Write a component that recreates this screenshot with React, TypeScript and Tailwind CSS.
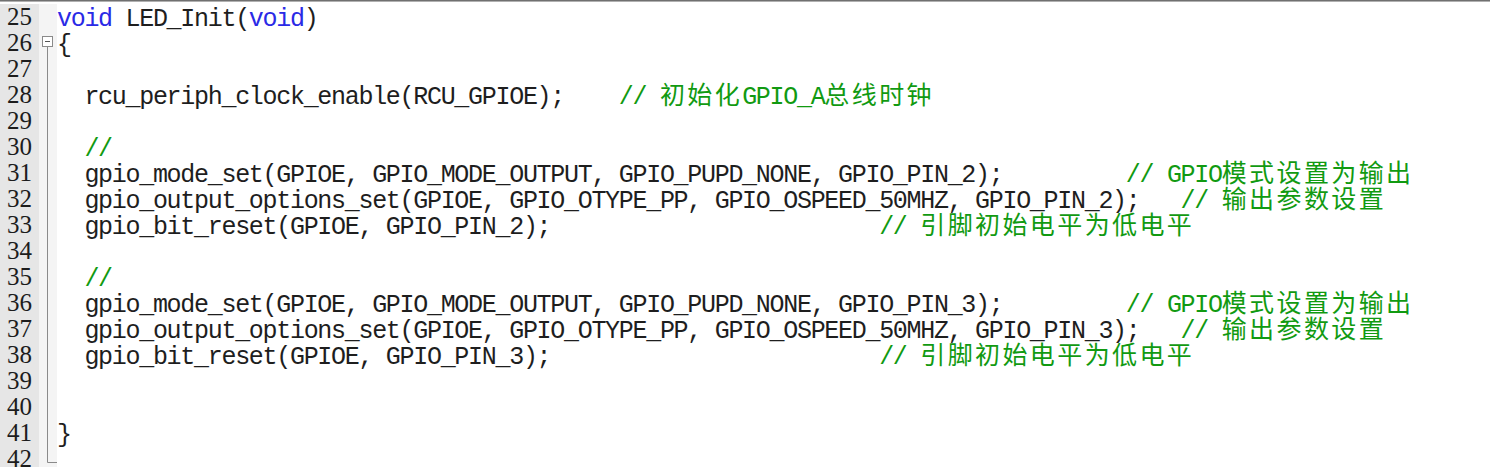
import React from 'react';

type Fold = 'none' | 'open' | 'line' | 'end';

interface CodeLine {
  no: number;
  fold: Fold;
  code: string;
  comment?: string;
  keyword?: boolean;
}

const ind = '  ';

const lines: CodeLine[] = [
  { no: 25, fold: 'none', code: '', keyword: true },
  { no: 26, fold: 'open', code: '{' },
  { no: 27, fold: 'line', code: '' },
  { no: 28, fold: 'line', code: ind + 'rcu_periph_clock_enable(RCU_GPIOE);    ', comment: '// 初始化GPIO_A总线时钟' },
  { no: 29, fold: 'line', code: '' },
  { no: 30, fold: 'line', code: ind, comment: '//' },
  { no: 31, fold: 'line', code: ind + 'gpio_mode_set(GPIOE, GPIO_MODE_OUTPUT, GPIO_PUPD_NONE, GPIO_PIN_2);         ', comment: '// GPIO模式设置为输出' },
  { no: 32, fold: 'line', code: ind + 'gpio_output_options_set(GPIOE, GPIO_OTYPE_PP, GPIO_OSPEED_50MHZ, GPIO_PIN_2);   ', comment: '// 输出参数设置' },
  { no: 33, fold: 'line', code: ind + 'gpio_bit_reset(GPIOE, GPIO_PIN_2);                        ', comment: '// 引脚初始电平为低电平' },
  { no: 34, fold: 'line', code: '' },
  { no: 35, fold: 'line', code: ind, comment: '//' },
  { no: 36, fold: 'line', code: ind + 'gpio_mode_set(GPIOE, GPIO_MODE_OUTPUT, GPIO_PUPD_NONE, GPIO_PIN_3);         ', comment: '// GPIO模式设置为输出' },
  { no: 37, fold: 'line', code: ind + 'gpio_output_options_set(GPIOE, GPIO_OTYPE_PP, GPIO_OSPEED_50MHZ, GPIO_PIN_3);   ', comment: '// 输出参数设置' },
  { no: 38, fold: 'line', code: ind + 'gpio_bit_reset(GPIOE, GPIO_PIN_3);                        ', comment: '// 引脚初始电平为低电平' },
  { no: 39, fold: 'line', code: '' },
  { no: 40, fold: 'line', code: '' },
  { no: 41, fold: 'line', code: '}' },
  { no: 42, fold: 'end', code: '' },
];

// wide chars get their own font so they take two columns
const Comment: React.FC<{ text: string }> = ({ text }) => {
  const parts = text.split(/([\u4e00-\u9fff]+)/).filter(Boolean);
  return (
    <span className="text-[#119a11]">
      {parts.map((p, i) =>
        /[\u4e00-\u9fff]/.test(p) ? (
          <span key={i} className="font-['Noto_Sans_CJK_SC',sans-serif] text-[25px] tracking-[2.4px] leading-[0px]">
            {p}
          </span>
        ) : (
          <span key={i}>{p}</span>
        )
      )}
    </span>
  );
};

const FoldMark: React.FC<{ fold: Fold }> = ({ fold }) => (
  <svg width="18" height="26" viewBox="0 0 18 26" className="block">
    {fold === 'open' && (
      <g stroke="#8a8a8a" fill="none" strokeWidth="1">
        <rect x="3.5" y="6.5" width="10" height="10" fill="#ffffff" />
        <line x1="6" y1="11.5" x2="11" y2="11.5" stroke="#555555" />
        <line x1="8.5" y1="17" x2="8.5" y2="26" />
      </g>
    )}
    {fold === 'line' && <line x1="8.5" y1="0" x2="8.5" y2="26" stroke="#8a8a8a" strokeWidth="1" />}
    {fold === 'end' && (
      <path d="M8.5 0 V16.5 H18" stroke="#8a8a8a" strokeWidth="1" fill="none" />
    )}
  </svg>
);

const App: React.FC = () => {
  return (
    <div className="w-[1490px] h-[467px] overflow-hidden bg-white">
      <div className="h-px bg-[#707070]" />
      <div className="h-px bg-[#b0b0b0]" />
      <div className="flex flex-col pt-[2px]">
        {lines.map((l) => (
          <div key={l.no} className="flex h-[26px] shrink-0">
            <div className="w-[39px] shrink-0 bg-[#e6e6e6] pl-[7px] font-['Liberation_Serif',serif] text-[25px] leading-[26px] text-[#1c1c1c]">
              {l.no}
            </div>
            <div className="w-[18px] shrink-0 bg-[#f4f4f4]">
              <FoldMark fold={l.fold} />
            </div>
            <div className="flex-1 pt-[3px] whitespace-pre font-['Liberation_Mono',monospace] text-[25px] tracking-[-1.3px] leading-[26px] text-[#1e1e1e]">
              {l.keyword ? (
                <>
                  <span className="text-[#2a2ae6]">void</span> LED_Init(<span className="text-[#2a2ae6]">void</span>)
                </>
              ) : (
                l.code
              )}
              {l.comment && <Comment text={l.comment} />}
            </div>
          </div>
        ))}
      </div>
    </div>
  );
};

export default App;
